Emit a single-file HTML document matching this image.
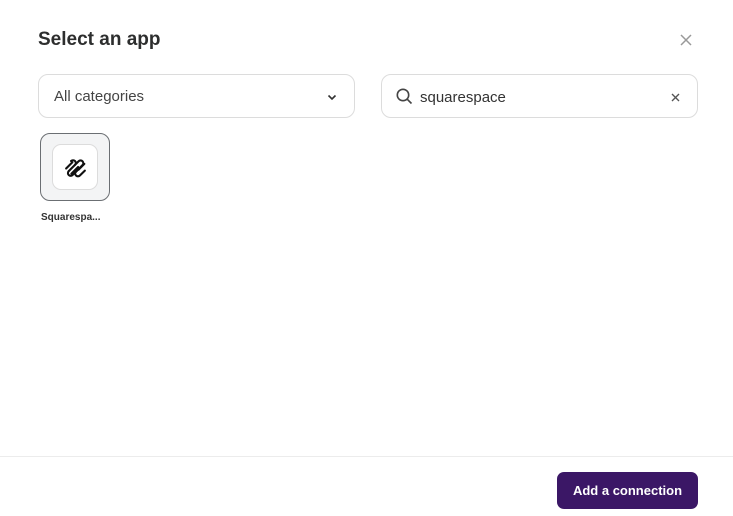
<!DOCTYPE html>
<html><head><style>
body{margin:0;width:733px;height:516px;background:#fff;font-family:"Liberation Sans",sans-serif;position:relative;overflow:hidden;color:#2d2e2e}
.t{position:absolute;left:38px;top:29px;font-size:19px;font-weight:bold;color:#2d2e2e}
.x{position:absolute;left:679px;top:33px}
.sel,.srch{position:absolute;top:74px;height:44px;border:1px solid #dcdcdc;border-radius:10px;box-sizing:border-box}
.sel{left:38px;width:317px}
.srch{left:381px;width:317px}
.sel span{position:absolute;left:15px;top:13px;font-size:15px;color:#444}
.srch span{position:absolute;left:38px;top:14px;font-size:15px;color:#333}
.tile{position:absolute;left:40px;top:133px;width:70px;height:68px;box-sizing:border-box;border:1px solid #6b6f73;border-radius:10px;background:#f3f4f5}
.inner{position:absolute;left:11px;top:10px;width:46px;height:46px;box-sizing:border-box;border:1px solid #dcdcdc;border-radius:9px;background:#fff}
.lbl{position:absolute;left:41px;top:212px;font-size:10px;font-weight:bold;color:#333}
.hr{position:absolute;left:0;right:0;top:456px;border-top:1px solid #ececec}
.btn{position:absolute;left:557px;top:472px;width:141px;height:37px;background:#3b1766;border-radius:7px;color:#fff;font-size:13px;font-weight:bold;text-align:center;line-height:37px}
</style></head><body>
<div class="t">Select an app</div>
<svg class="x" width="14" height="14" viewBox="0 0 14 14"><path d="M2 2L12 12M12 2L2 12" stroke="#999" stroke-width="1.5"/></svg>
<div class="sel"><span>All categories</span><svg style="position:absolute;left:288px;top:19px" width="10" height="7" viewBox="0 0 10 7"><path d="M1.5 1.5L5 5L8.5 1.5" stroke="#333" stroke-width="1.6" fill="none"/></svg></div>
<div class="srch"><svg style="position:absolute;left:14px;top:13px" width="17" height="17" viewBox="0 0 17 17"><circle cx="7" cy="7" r="5.7" stroke="#444" stroke-width="1.6" fill="none"/><path d="M11.2 11.2L15.5 15.5" stroke="#444" stroke-width="1.6"/></svg><span>squarespace</span><svg style="position:absolute;left:289px;top:18px" width="9" height="9" viewBox="0 0 9 9"><path d="M1 1L8 8M8 1L1 8" stroke="#555" stroke-width="1.4"/></svg></div>
<div class="tile"><div class="inner"><svg style="position:absolute;left:10px;top:10px" width="25" height="25" viewBox="0 0 24 24" fill="none" stroke="#111" stroke-width="2" stroke-linecap="round"><path d="M3 13L9 7"/><path d="M5.5 15.5L11.5 9.5a2.6 2.6 0 0 0-3.7-3.7"/><path d="M7.8 5.8l0 0"/><path d="M8 18L14.5 11.5"/><path d="M5.5 15.5a2.6 2.6 0 0 0 3.7 3.7L15.5 13"/><path d="M11.5 9.5L15 6a2.6 2.6 0 0 1 3.7 3.7L12.5 16"/><path d="M15 14L20.5 8.5"/><path d="M12.5 16a2.6 2.6 0 0 0 3.7 3.7L21 15"/></svg></div></div>
<div class="lbl">Squarespa...</div>
<div class="hr"></div>
<div class="btn">Add a connection</div>
</body></html>
